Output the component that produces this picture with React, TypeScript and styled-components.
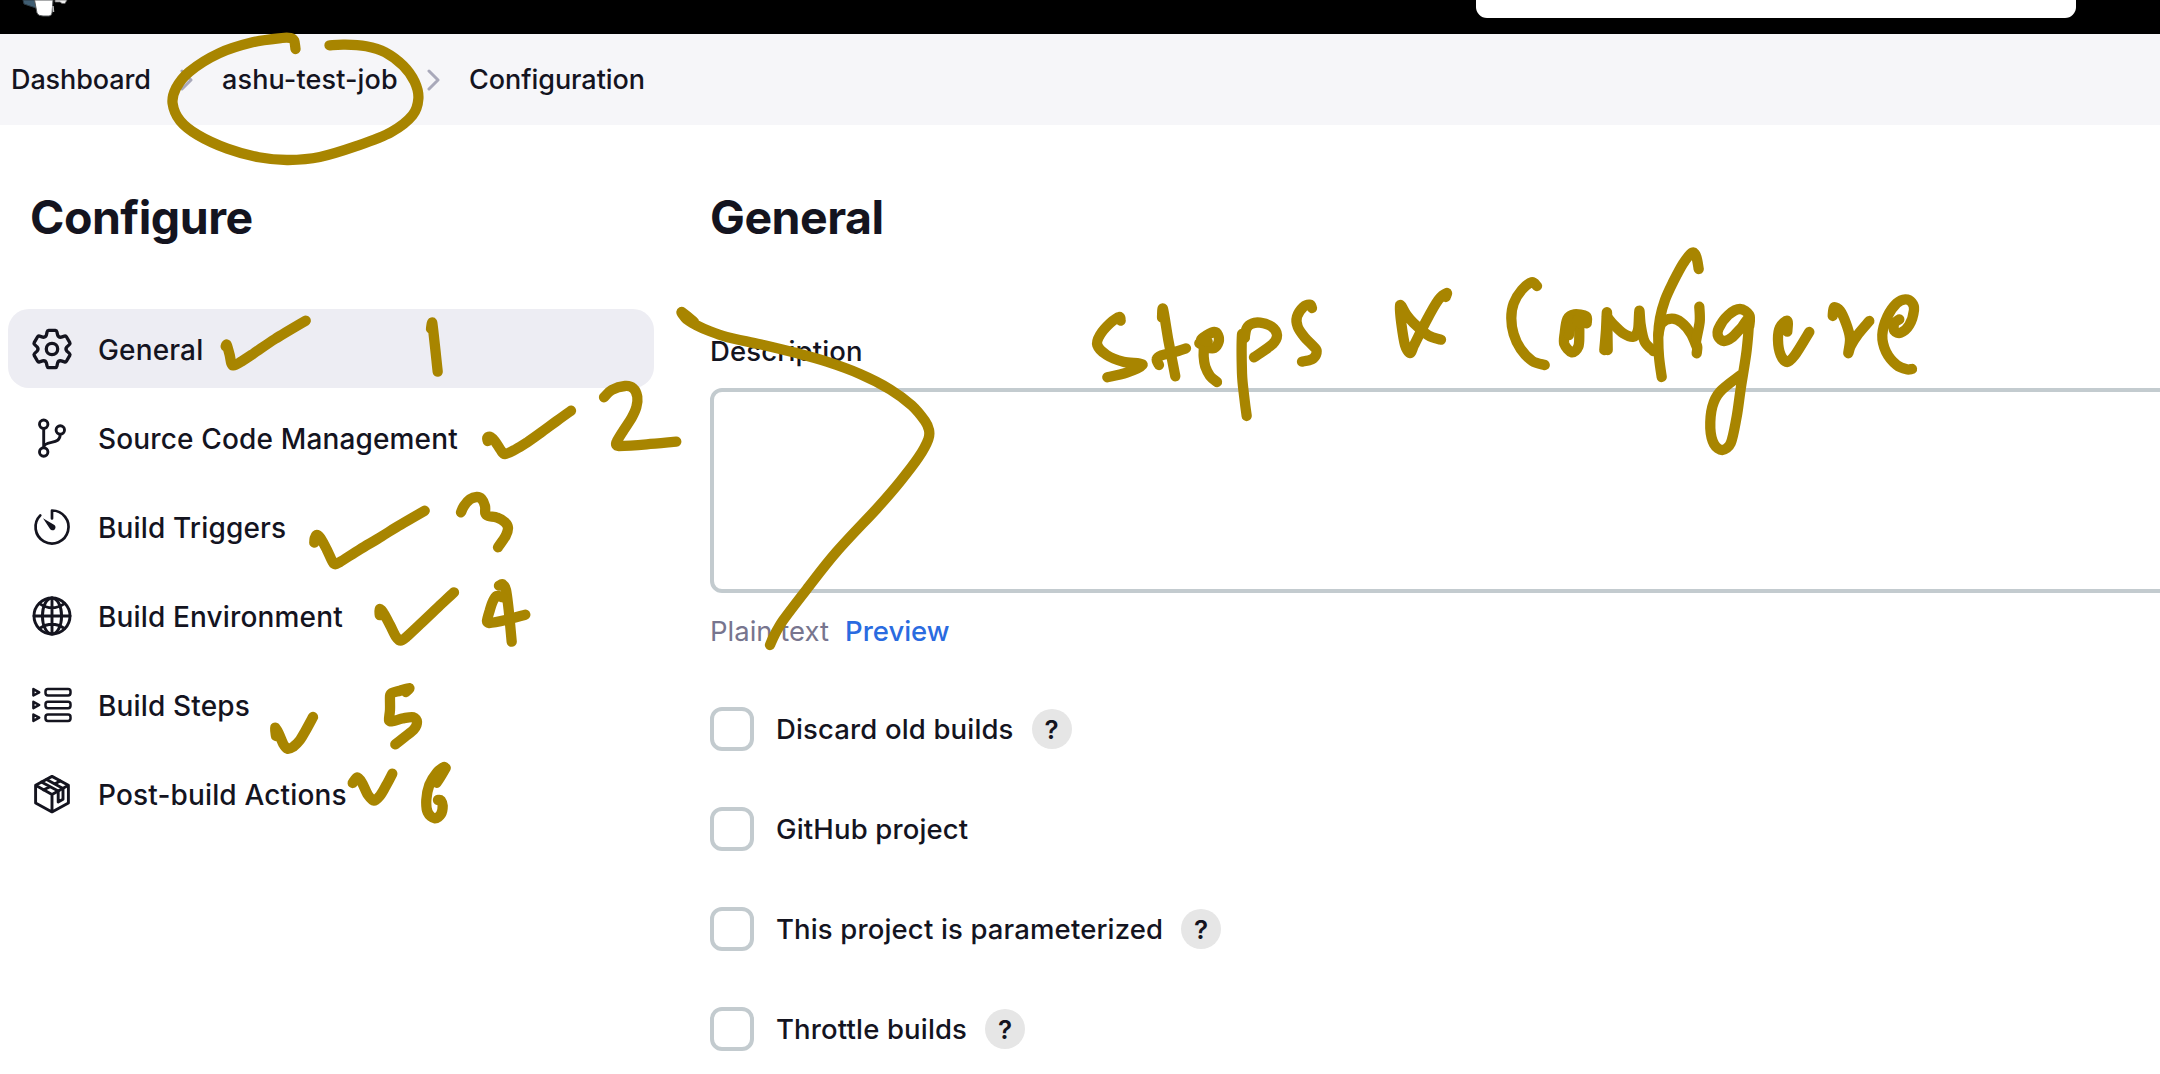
import React from "react";
import styled, { createGlobalStyle } from "styled-components";

const ink = "#14141f";
const border = "#c3cbcf";
const marker = "#a88500";

const GlobalStyle = createGlobalStyle`
  * { box-sizing: border-box; }
  html, body { margin: 0; padding: 0; background: #fff; }
  body {
    width: 2160px;
    height: 1074px;
    overflow: hidden;
    color: ${ink};
    font-family: Inter, "Liberation Sans", sans-serif;
    font-size: 27px;
    font-weight: 500;
  }
`;

const Page = styled.div`
  position: relative;
  width: 2160px;
  height: 1074px;
  overflow: hidden;
  display: flex;
  flex-direction: column;
`;

const TopBar = styled.header`
  height: 34px;
  flex: none;
  background: #000;
  display: flex;
  align-items: flex-start;
  justify-content: space-between;
  padding: 0 84px 0 20px;
`;

const Logo = styled.svg`
  display: block;
  width: 52px;
  height: 20px;
`;

const SearchBox = styled.div`
  width: 600px;
  height: 18px;
  background: #fff;
  border-radius: 0 0 11px 11px;
`;

const Breadcrumbs = styled.nav`
  height: 91px;
  flex: none;
  background: #f6f6f9;
  display: flex;
  align-items: center;
  padding: 0 0 0 11px;
`;

const Crumb = styled.span<{ $w: number; $ls?: number }>`
  width: ${(p) => p.$w}px;
  white-space: nowrap;
  line-height: 34px;
  letter-spacing: ${(p) => p.$ls ?? 0}px;
`;

const Chevron = styled.svg`
  display: block;
  width: 14px;
  height: 22px;
  margin: 0 28px 0 30px;
  fill: none;
  stroke: #a9a9ba;
  stroke-width: 3;
  stroke-linecap: round;
  stroke-linejoin: round;
`;

const Body = styled.div`
  flex: 1;
  min-height: 0;
  display: flex;
`;

const Sidebar = styled.aside`
  width: 710px;
  flex: none;
  padding: 64px 56px 0 8px;
`;

const Heading = styled.h1<{ $indent?: number }>`
  margin: 0;
  padding-left: ${(p) => p.$indent ?? 0}px;
  font-size: 46.5px;
  line-height: 56px;
  font-weight: 700;
  letter-spacing: -0.5px;
`;

const Menu = styled.ul`
  list-style: none;
  margin: 64px 0 0;
  padding: 0;
  display: flex;
  flex-direction: column;
  gap: 10.2px;
`;

const MenuItem = styled.li<{ $active?: boolean }>`
  height: 79px;
  border-radius: 21px;
  padding-left: 22px;
  display: flex;
  align-items: center;
  gap: 24px;
  background: ${(p) => (p.$active ? "#ededf3" : "transparent")};
  font-size: 28px;
  letter-spacing: 0.15px;
  white-space: nowrap;
`;

const MenuLabel = styled.span`
  padding-top: 2px;
`;

const Icon = styled.svg<{ $stroke?: number }>`
  display: block;
  width: 44px;
  height: 44px;
  flex: none;
  fill: none;
  stroke: ${ink};
  stroke-width: ${(p) => p.$stroke ?? 2.9};
  stroke-linecap: round;
  stroke-linejoin: round;
`;

const Main = styled.main`
  flex: 1;
  min-width: 0;
  padding-top: 64px;
  font-size: 27.5px;
`;

const FieldLabel = styled.label`
  display: block;
  margin-top: 89px;
  line-height: 34px;
  letter-spacing: 0.15px;
`;

const DescriptionBox = styled.div`
  width: 1500px;
  height: 205px;
  margin-top: 20px;
  border: 4px solid ${border};
  border-radius: 12px;
`;

const Formatter = styled.div`
  margin-top: 21px;
  height: 34px;
  line-height: 34px;
  display: flex;
  gap: 16px;
`;

const Muted = styled.span`
  color: #77758e;
  font-weight: 400;
`;

const PreviewLink = styled.a`
  color: #2a6be0;
`;

const Options = styled.div`
  margin-top: 59px;
  display: flex;
  flex-direction: column;
  gap: 56px;
`;

const Option = styled.div`
  height: 44px;
  display: flex;
  align-items: center;
  white-space: nowrap;
  letter-spacing: 0.15px;
`;

const Checkbox = styled.span`
  width: 44px;
  height: 44px;
  flex: none;
  margin-right: 22px;
  border: 4px solid ${border};
  border-radius: 12px;
`;

const Help = styled.span`
  width: 40px;
  height: 40px;
  margin-left: 18px;
  border-radius: 50%;
  background: #e6e6e6;
  display: flex;
  align-items: center;
  justify-content: center;
  font-size: 26px;
  font-weight: 600;
  letter-spacing: 0;
`;

const Annotations = styled.svg`
  position: absolute;
  left: 0;
  top: 0;
  width: 2160px;
  height: 1074px;
  pointer-events: none;
  fill: none;
  stroke: ${marker};
  stroke-width: 10.3;
  stroke-linecap: round;
  stroke-linejoin: round;
`;

/* ---------- icons ---------- */

const gearPath = (() => {
  const at = (x: number, y: number, k: number) => {
    const a = (k * Math.PI) / 3;
    const px = 22 + x * Math.cos(a) + y * Math.sin(a);
    const py = 22 + x * Math.sin(a) - y * Math.cos(a);
    return `${px.toFixed(2)} ${py.toFixed(2)}`;
  };
  let d = "";
  for (let k = 0; k < 6; k++) {
    d += `${k ? "L" : "M"}${at(-5.6, 14, k)} L${at(-4.9, 17.2, k)} Q${at(-4.6, 18.6, k)} ${at(-3.4, 18.6, k)} `;
    d += `L${at(3.4, 18.6, k)} Q${at(4.6, 18.6, k)} ${at(4.9, 17.2, k)} L${at(5.6, 14, k)} `;
    d += `Q${at(6.5, 11.3, k)} ${at(9.3, 11.8, k)} `;
  }
  return d + "Z";
})();

const GearIcon = () => (
  <Icon viewBox="0 0 44 44" $stroke={3.3}>
    <path d={gearPath} />
    <circle cx="22" cy="22" r="5.7" />
  </Icon>
);

const BranchIcon = () => (
  <Icon viewBox="0 0 44 44">
    <circle cx="13.7" cy="8.2" r="4.2" />
    <circle cx="30.3" cy="13.9" r="4.2" />
    <circle cx="13.7" cy="36" r="4.2" />
    <path d="M13.7 12.8V31.4M30.2 18.5C30 24.5 26.5 25.3 21.5 26.3C17.5 27.1 13.7 28 13.7 31.4" />
  </Icon>
);

const TimerIcon = () => (
  <Icon viewBox="0 0 44 44" $stroke={2.7}>
    <path d="M22 13.4V5.500A16.500 16.500 0 1 1 10.300 10.400" />
    <path d="M13 13.200L24.400 20A3 3 0 1 1 19.900 23.800Z" fill={ink} stroke="none" />
  </Icon>
);

const GlobeIcon = () => (
  <Icon viewBox="0 0 44 44">
    <circle cx="22" cy="22" r="18" />
    <ellipse cx="22" cy="22" rx="9.6" ry="18" />
    <path d="M22 4V40M4 22H40M9.6 9.6Q22 18 34.4 9.6M9.6 34.4Q22 26 34.4 34.4" />
  </Icon>
);

const StepsIcon = () => (
  <Icon viewBox="0 0 44 44" $stroke={2.5}>
    {[9.3, 22, 34.7].map((y) => (
      <g key={y}>
        <path d={`M3.4 ${y - 3.2}L9.2 ${y}L3.4 ${y + 3.2}Z`} />
        <rect x="15.5" y={y - 3.2} width="25" height="6.4" rx="2.4" />
      </g>
    ))}
  </Icon>
);

const PackageIcon = () => (
  <Icon viewBox="0 0 44 44">
    <path d="M22 4.4L38.4 13.2V31L22 39.9L5.6 31V13.2ZM5.6 13.2L22 22.4L38.4 13.2M22 22.4V39.9" />
    <path d="M16.6 7.4L33 16.4V27.2L28.2 30V19L11.4 10M19.6 15L13.7 17.8M30.2 9L25 11.8" />
  </Icon>
);

/* ---------- freehand marks ---------- */

type Stroke = { o: [number, number]; s: [number, number]; p: number[] };

/* Smooth curve through every sampled pen position. */
const curve = ({ o, s, p }: Stroke) => {
  const pts: [number, number][] = [];
  for (let i = 0; i < p.length; i += 2) pts.push([o[0] + p[i] / s[0], o[1] + p[i + 1] / s[1]]);
  const f = (n: number) => n.toFixed(1);
  let d = `M${f(pts[0][0])} ${f(pts[0][1])}`;
  for (let i = 0; i < pts.length - 1; i++) {
    const a = pts[i - 1] ?? pts[i];
    const b = pts[i];
    const c = pts[i + 1];
    const e = pts[i + 2] ?? c;
    const lim = Math.hypot(c[0] - b[0], c[1] - b[1]) / 2.6;
    const tan = (x: number, y: number) => {
      const l = Math.hypot(x, y) / 6;
      const k = l > lim ? lim / l : 1;
      return [(x / 6) * k, (y / 6) * k];
    };
    const t1 = tan(c[0] - a[0], c[1] - a[1]);
    const t2 = tan(e[0] - b[0], e[1] - b[1]);
    d += `C${f(b[0] + t1[0])} ${f(b[1] + t1[1])} ${f(c[0] - t2[0])} ${f(c[1] - t2[1])} ${f(c[0])} ${f(c[1])}`;
  }
  return d;
};

const group = (o: [number, number], s: [number, number], ...lines: number[][]): Stroke[] =>
  lines.map((p) => ({ o, s, p }));

const strokes: Stroke[] = [
  // loop round the job name
  ...group([0, 0], [2.376, 3],
    [702, 147, 699, 122, 690, 114, 670, 114, 600, 127, 520, 160, 450, 215, 418, 265, 410, 310, 428, 362, 470, 405, 540, 446, 615, 472, 685, 480, 760, 471, 850, 437, 930, 396, 980, 346, 994, 295, 985, 245, 958, 197, 915, 157, 870, 139, 820, 134, 783, 136]),
  // sidebar ticks
  ...group([0, 300], [3, 3],
    [677, 139, 680, 134, 689, 165, 694, 190, 700, 196, 720, 187, 760, 161, 825, 117, 917, 62],
    [943, 728, 944, 715, 950, 705, 962, 715, 980, 748, 998, 786, 1006, 793, 1020, 786, 1080, 748, 1145, 709, 1190, 681, 1274, 632]),
  ...group([0, 560], [3, 3],
    [828, 528, 825, 503, 836, 520, 850, 552, 862, 566, 880, 560, 900, 540, 915, 515, 939, 471]),
  // numbers and ticks beside the menu
  ...group([340, 300], [3, 3],
    [273, 86, 277, 69, 293, 215],
    [443, 423, 442, 413, 452, 411, 466, 425, 482, 450, 495, 462, 525, 449, 560, 428, 600, 400, 650, 363, 693, 332],
    [792, 292, 815, 270, 855, 258, 880, 265, 892, 290, 889, 322, 875, 353, 850, 392, 830, 425, 829, 435, 836, 438, 920, 433, 1009, 425],
    [363, 637, 372, 618, 390, 598, 410, 591, 425, 597, 435, 618, 436, 640, 445, 648, 472, 653, 495, 667, 504, 684, 497, 708, 474, 742]),
  ...group([340, 560], [3, 3],
    [119, 165, 119, 147, 130, 158, 150, 195, 168, 230, 182, 242, 200, 230, 240, 193, 300, 136, 342, 97],
    [477, 77, 488, 73, 498, 90, 506, 150, 515, 245],
    [488, 112, 470, 108, 458, 125, 449, 152, 441, 183, 447, 189, 500, 179, 556, 164],
    [198, 396, 208, 384, 180, 392, 154, 400, 150, 408, 150, 450, 147, 480, 155, 484, 190, 475, 220, 472, 231, 486, 222, 508, 195, 530, 166, 553],
    [38, 669, 52, 652, 66, 668, 84, 705, 102, 722, 120, 707, 138, 677, 157, 641],
    [317, 624, 290, 668, 301, 635, 313, 621, 290, 638, 268, 675, 259, 720, 263, 757, 284, 775, 303, 762, 308, 737, 302, 721, 294, 720]),
  // bracket across the description field
  ...group([660, 180], [3, 3],
    [102, 426, 65, 396, 80, 418, 110, 436, 150, 454, 200, 471, 300, 493, 400, 517, 500, 545, 600, 582, 690, 628, 755, 676, 795, 723, 807, 750, 805, 778, 775, 833, 720, 905, 650, 986, 530, 1115, 440, 1228, 370, 1320, 345, 1362, 330, 1395]),
  // handwritten note, first words
  ...group([1060, 240], [3, 3],
    [182, 242, 178, 231, 150, 250, 120, 285, 112, 315, 140, 345, 190, 365, 248, 374, 200, 398, 142, 412],
    [306, 233, 309, 207, 325, 300, 346, 409],
    [297, 375, 290, 358, 305, 346, 340, 337, 378, 325],
    [418, 310, 440, 322, 463, 324, 476, 305, 474, 285, 463, 276, 440, 286, 423, 300, 431, 320, 431, 350, 436, 380, 450, 408, 471, 426],
    [430, 302, 443, 305],
    [554, 293, 546, 283, 546, 400, 552, 465, 560, 528],
    [554, 293, 560, 265, 575, 251, 600, 248, 635, 260, 651, 285, 638, 312, 582, 352],
    [756, 204, 750, 194, 730, 201, 711, 230, 713, 260, 735, 293, 768, 328, 768, 344, 755, 358, 726, 365],
    [1143, 299, 1105, 286, 1060, 248, 1040, 225, 1020, 195, 1024, 250, 1035, 315, 1050, 339, 1062, 316, 1100, 240, 1135, 180, 1160, 159, 1157, 171]),
  // handwritten note, last word
  ...group([1480, 240], [3, 3],
    [171, 138, 155, 127, 125, 150, 101, 190, 94, 235, 101, 283, 122, 327, 157, 363, 194, 375],
    [320, 250, 318, 229, 283, 223, 262, 237, 254, 280, 253, 312, 275, 337, 295, 320, 298, 280, 297, 240],
    [275, 240, 267, 285],
    [290, 242, 300, 250],
    [373, 330, 378, 270, 381, 218, 383, 330],
    [381, 230, 400, 253, 430, 280, 460, 290, 474, 270, 478, 212, 482, 255, 494, 305, 520, 333],
    [656, 87, 649, 50, 637, 38, 610, 70, 580, 125, 555, 180, 540, 235, 535, 285, 537, 350, 545, 411],
    [535, 285, 545, 250, 575, 236, 605, 248, 632, 280, 650, 320],
    [658, 200, 659, 245, 648, 305, 652, 322, 650, 340],
    [808, 258, 808, 225, 780, 207, 745, 225, 716, 265, 715, 290, 732, 303, 755, 293, 785, 262, 806, 240, 800, 330, 783, 440, 770, 530, 752, 610, 727, 630, 702, 612, 691, 565, 697, 500, 720, 455, 782, 405],
    [922, 275, 922, 242, 900, 262, 894, 300, 902, 345, 922, 366, 945, 345, 988, 276],
    [1058, 228, 1062, 202, 1080, 212, 1098, 250, 1110, 295, 1105, 339, 1112, 318, 1135, 282, 1168, 243],
    [1258, 238, 1243, 250, 1243, 272, 1262, 278, 1288, 255, 1302, 210, 1296, 188, 1276, 178, 1250, 190, 1222, 230, 1207, 285, 1218, 335, 1250, 375, 1280, 388, 1296, 387]),
];

const menu = [
  { label: "General", icon: <GearIcon />, active: true },
  { label: "Source Code Management", icon: <BranchIcon /> },
  { label: "Build Triggers", icon: <TimerIcon /> },
  { label: "Build Environment", icon: <GlobeIcon /> },
  { label: "Build Steps", icon: <StepsIcon /> },
  { label: "Post-build Actions", icon: <PackageIcon /> },
];

const options = [
  { label: "Discard old builds", help: true },
  { label: "GitHub project", help: false },
  { label: "This project is parameterized", help: true },
  { label: "Throttle builds", help: true },
];

const Separator = () => (
  <Chevron viewBox="0 0 14 22">
    <path d="M2 2L11 11L2 20" />
  </Chevron>
);

export default function App() {
  return (
    <Page>
      <GlobalStyle />
      <TopBar>
        <Logo viewBox="20 0 52 20">
          <path d="M23 0L24 4L36 8V0Z" fill="#3f5d72" stroke="#2c3a44" strokeWidth="1" />
          <path d="M34.5 0L37 13Q38 16 43 16H49Q51.500 16 52 13L53 0Z" fill="#fff" stroke="#55585a" strokeWidth="1" />
          <path d="M53 6L53.500 12" stroke="#bbb" strokeWidth="1.500" />
          <path d="M55 0V2H60L62 3.500H65L67 0Z" fill="#eee" stroke="#666" strokeWidth=".8" />
        </Logo>
        <SearchBox />
      </TopBar>
      <Breadcrumbs>
        <Crumb $w={139} $ls={-0.1}>Dashboard</Crumb>
        <Separator />
        <Crumb $w={175} $ls={0.13}>ashu-test-job</Crumb>
        <Separator />
        <Crumb $w={180} $ls={-0.05}>Configuration</Crumb>
      </Breadcrumbs>
      <Body>
        <Sidebar>
          <Heading $indent={22}>Configure</Heading>
          <Menu>
            {menu.map((m) => (
              <MenuItem key={m.label} $active={m.active}>
                {m.icon}
                <MenuLabel>{m.label}</MenuLabel>
              </MenuItem>
            ))}
          </Menu>
        </Sidebar>
        <Main>
          <Heading>General</Heading>
          <FieldLabel>Description</FieldLabel>
          <DescriptionBox />
          <Formatter>
            <Muted>Plain text</Muted>
            <PreviewLink>Preview</PreviewLink>
          </Formatter>
          <Options>
            {options.map((o) => (
              <Option key={o.label}>
                <Checkbox />
                <span>{o.label}</span>
                {o.help && <Help>?</Help>}
              </Option>
            ))}
          </Options>
        </Main>
      </Body>
      <Annotations viewBox="0 0 2160 1074">
        {strokes.map((s, i) => (
          <path key={i} d={curve(s)} />
        ))}
      </Annotations>
    </Page>
  );
}
